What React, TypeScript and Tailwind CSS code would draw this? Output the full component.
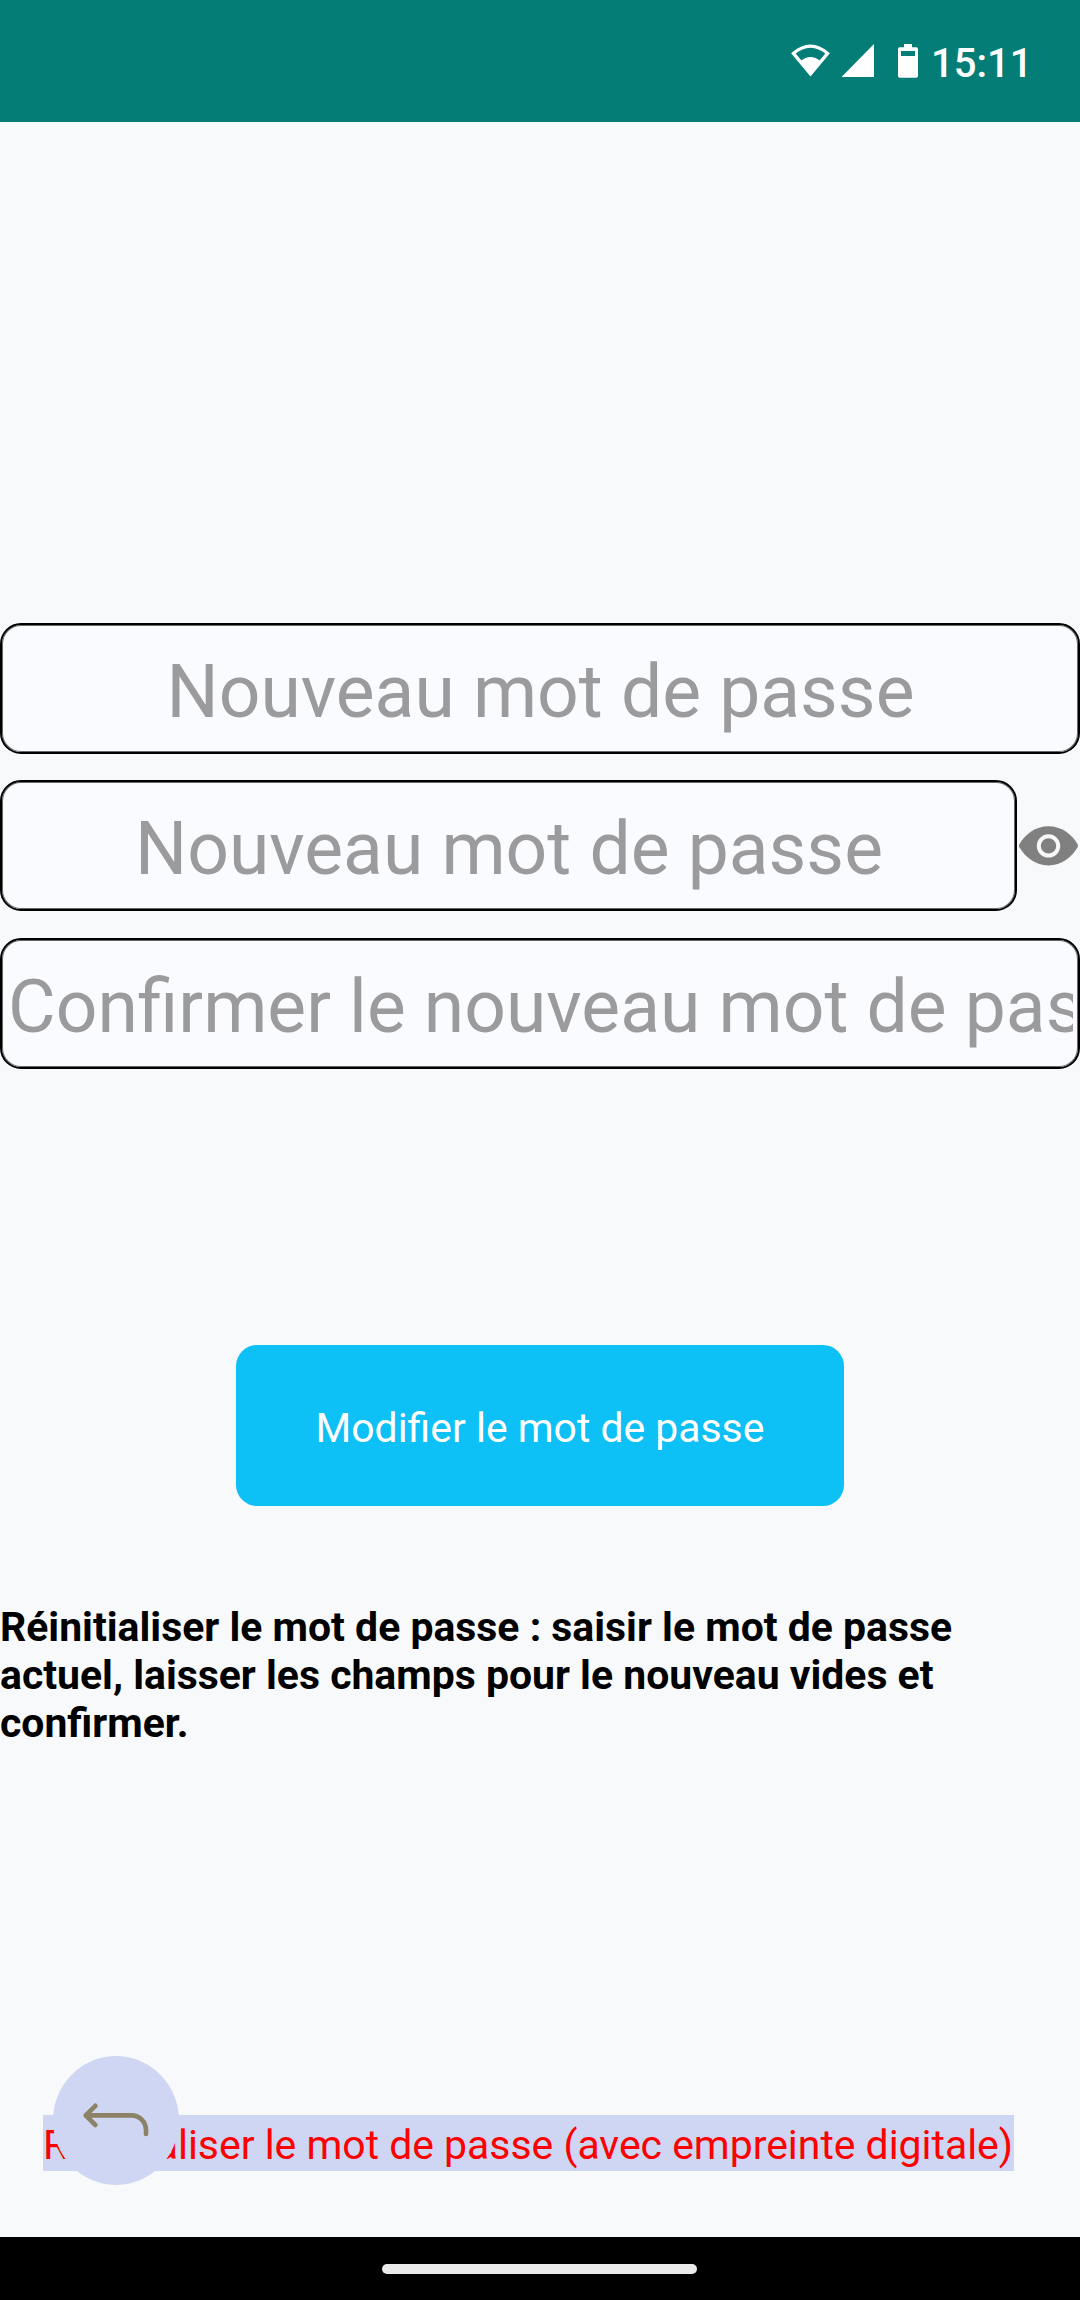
import React from "react";

function StatusBar() {
  return (
    <header className="flex h-[122px] shrink-0 items-start bg-[#057d77] pl-[791px] pt-[44px] text-white">
      <svg className="h-[34px] w-[39px] shrink-0" viewBox="0 0 39 34">
        <path d="M2.4 9.4Q19.5 -5.2 36.6 9.4L19.5 30Z" fill="none" stroke="currentColor" strokeWidth="3.3" />
        <path d="M9.3 17.2Q19.5 8.6 29.7 17.2L19.5 31.5Z" fill="currentColor" />
      </svg>
      <svg className="ml-[11px] h-[34px] w-[33px] shrink-0" viewBox="0 0 33 34">
        <path d="M33 0V33H0.5Z" fill="currentColor" />
      </svg>
      <svg className="ml-[24px] h-[34px] w-[20px] shrink-0" viewBox="0 0 20 34">
        <path
          fillRule="evenodd"
          fill="currentColor"
          d="M6 0H14V3.3H18.3Q20 3.3 20 5V32Q20 33.7 18.3 33.7H1.7Q0 33.7 0 32V5Q0 3.3 1.7 3.3H6ZM3 7V12H17V7Z"
        />
      </svg>
      <span className="ml-[13px] -mt-[3px] text-[40px] font-medium leading-[46px]">15:11</span>
    </header>
  );
}

function Field({ label, className = "" }: { label: string; className?: string }) {
  return (
    <div
      className={`h-[131px] overflow-hidden rounded-[21px] border-2 border-black bg-[#fafbff] px-[5px] pt-[7px] shadow-[inset_0_0_0_1px_#666] ${className}`}
    >
      <div className="flex h-full items-center overflow-hidden pl-px">
        <span className="mx-auto whitespace-nowrap text-[73.2px] leading-[90px] text-[#9b9b9d]">{label}</span>
      </div>
    </div>
  );
}

function EyeIcon() {
  return (
    <svg className="ml-[2px] mt-px h-[40px] w-[59px]" viewBox="0 0 59 40">
      <path
        d="M0.4 18.2C6 8.5 16.5 0.3 29.5 0.3S53 8.5 58.6 18.2Q59.4 19.7 58.6 21.2C53 31 42.5 39.4 29.5 39.4S6 31 0.4 21.2Q-0.4 19.7 0.4 18.2Z"
        fill="#808080"
      />
      <circle cx="29.5" cy="19.9" r="9.7" fill="none" stroke="#f8f9fb" strokeWidth="4" />
    </svg>
  );
}

export default function App() {
  return (
    <div className="flex h-[2300px] w-[1080px] flex-col overflow-hidden bg-[#f8f9fb] font-['Roboto',sans-serif]">
      <StatusBar />
      <main className="flex flex-1 flex-col">
        <section className="mt-[501px] flex flex-col">
          <Field label="Nouveau mot de passe" />
          <div className="mt-[26px] flex items-center">
            <Field label="Nouveau mot de passe" className="w-[1017px]" />
            <EyeIcon />
          </div>
          <Field label="Confirmer le nouveau mot de passe" className="mt-[27px]" />
        </section>
        <button className="mt-[276px] flex h-[161px] w-[608px] items-center justify-center self-center rounded-[21px] bg-[#0dc0f5] pt-[5px] text-[40.9px] leading-[48px] text-white">
          Modifier le mot de passe
        </button>
        <p className="mt-[97px] w-[1060px] text-[40.94px] font-bold leading-[48px] text-black">
          Réinitialiser le mot de passe : saisir le mot de passe
          <br />
          actuel, laisser les champs pour le nouveau vides et
          <br />
          confirmer.
        </p>
        <div className="relative ml-[43px] mt-[368px] h-[56px] w-[971px] bg-[#ced6f3]">
          <span className="block whitespace-nowrap pt-[3px] text-[40.92px] leading-[54px] text-[#ff0000]">
            Réinitialiser le mot de passe (avec empreinte digitale)
          </span>
          <button
            aria-label="Retour"
            className="absolute left-[10px] top-[-59px] flex h-[129px] w-[126px] items-center justify-center rounded-[50%] bg-[#ced6f3]"
          >
            <svg className="h-[129px] w-[126px]" viewBox="0 0 126 129">
              <path
                d="M42.4 49.8L32.7 59.4L42.4 69M32.7 59.4H78.5A14.5 14.5 0 0 1 93 73.9V78"
                fill="none"
                stroke="#8c8266"
                strokeWidth="4.6"
                strokeLinecap="round"
                strokeLinejoin="round"
              />
            </svg>
          </button>
        </div>
      </main>
      <footer className="flex h-[63px] shrink-0 justify-center bg-black pr-px pt-[27px]">
        <div className="h-[10px] w-[315px] rounded-full bg-[#ebebeb]" />
      </footer>
    </div>
  );
}
